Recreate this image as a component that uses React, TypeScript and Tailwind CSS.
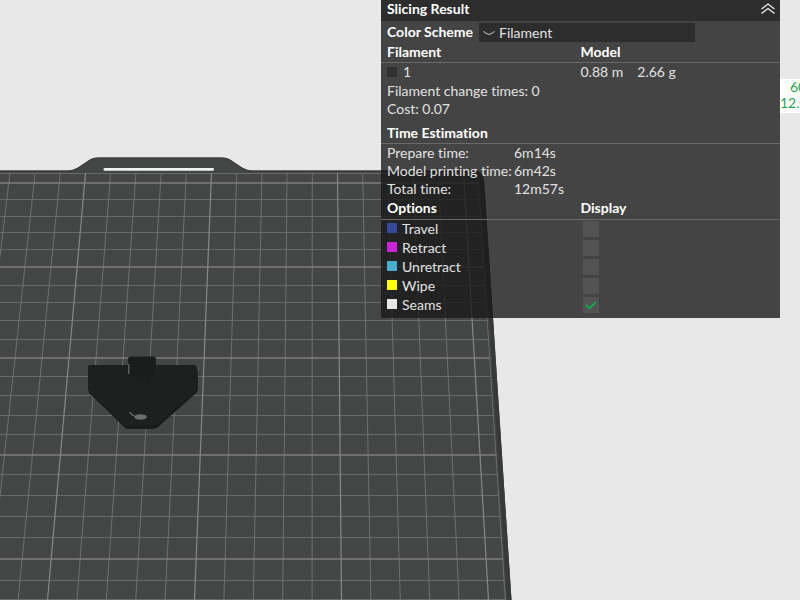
const MAJOR_ROWS = [183, 267, 358, 455, 559];
const MINOR_ROWS = [173, 199, 216, 232, 249, 285, 302, 320, 339, 376, 395, 415, 434, 474, 495, 516, 537, 580, 599];

// bed columns, counted from the major line nearest the middle
const COLUMNS = Array.from({ length: 24 }, (_, i) => i - 18);

const OPTIONS = [
  { id: "travel", label: "Travel", swatch: "bg-[#38489b]", on: false },
  { id: "retract", label: "Retract", swatch: "bg-[#cd22d6]", on: false },
  { id: "unretract", label: "Unretract", swatch: "bg-[#49adcf]", on: false },
  { id: "wipe", label: "Wipe", swatch: "bg-[#ffff00]", on: false },
  { id: "seams", label: "Seams", swatch: "bg-[#e6e6e6]", on: true },
];

const TIMES = [
  ["Prepare time:", "6m14s"],
  ["Model printing time:", "6m42s"],
  ["Total time:", "12m57s"],
];

function BuildPlate() {
  return (
    <svg
      viewBox="0 0 800 600"
      preserveAspectRatio="xMinYMin slice"
      className="block h-full w-full"
      role="img"
      aria-label="Build plate"
    >
      <defs>
        <clipPath id="grid">
          <path d="M0 173H478L506 600H0Z" />
        </clipPath>
      </defs>
      {/* plate with handle */}
      <path
        d="M0 170.500H68Q73 170.500 78 167.500L90 159.500Q93 157.500 98 157.500H222Q227 157.500 230 159.500L242 167.500Q247 170.500 252 170.500H474Q483 170.500 484 180L511.500 600H0Z"
        fill="#444645"
      />
      <path d="M0 171H68Q73 171 78 168L90 160Q93 158 98 158H222Q227 158 230 160L242 168Q247 171 252 171H474" fill="none" stroke="#3a3c3b" />
      <path d="M484 180L511.500 600H507L480 180Z" fill="#383a39" />
      <rect x="103.500" y="168" width="110.500" height="2.800" rx="1.400" fill="#f0f2f1" />

      <g clipPath="url(#grid)" fill="none">
        {MINOR_ROWS.map((y) => (
          <path key={y} d={`M0 ${y + 0.5}H510`} stroke="#686a69" />
        ))}
        {COLUMNS.map((n) => (
          <path
            key={n}
            d={`M${337.5 + n * 25.2} 173L${341.5 + n * 29.4} 600`}
            stroke={n % 5 === 0 ? "#868887" : "#6e706f"}
            strokeWidth={n % 5 === 0 ? 1.2 : 1}
          />
        ))}
        {MAJOR_ROWS.map((y) => (
          <path key={y} d={`M0 ${y}H510`} stroke="#7c7e7d" strokeWidth="1.300" />
        ))}
        <path d="M478 173L505.500 600" stroke="#686a69" strokeWidth="1.500" />
      </g>

      {/* sliced model */}
      <path d="M89 365H128V358L130 356.500H154L156 358V365H196L198 367V389L196 393L158 426L154 429H127L123 426L89 392L88 389V367Z" fill="#1e1f1f" />
      <path d="M129 358L155 357V372L148 384L139 381L130 374Z" fill="#1b1c1c" />
      <path d="M89 391L124 425H157L197 390V392L157 428H126L89 393Z" fill="#191a1a" />
      <path d="M128.800 364V374" stroke="#777978" />
      <path d="M129.500 412.500L134 416" stroke="#9b9d9c" />
      <ellipse cx="140.500" cy="417" rx="6.300" ry="2.700" fill="#6b6d6c" />
      <path d="M196 365.500L198 367V371" fill="none" stroke="#5b5d5c" />
    </svg>
  );
}

function SlicingPanel() {
  return (
    <aside className="absolute top-0 right-5 w-[calc(50%-1px)] bg-[#181818]/79 pb-1 text-[14px] leading-[18px] text-[#e2e2e2] [font-variant-ligatures:none]">
      <header className="flex h-[21px] items-start justify-between bg-[#2d2d2d] pr-1 pl-1.5">
        <h1 className="font-bold text-white">Slicing Result</h1>
        <button type="button" aria-label="Collapse" className="pt-0.5">
          <svg width="16" height="13" viewBox="0 0 16 13" fill="none" stroke="#e8e8e8" strokeWidth="1.300">
            <path d="M1.500 7L8 2L14.500 7M1.500 11.500L8 6.500L14.500 11.500" />
          </svg>
        </button>
      </header>

      <div className="flex h-[21px] items-center gap-1.5 pl-1.5">
        <label htmlFor="scheme" className="font-bold text-white">Color Scheme</label>
        <div className="mt-0.5 grid w-[216px] items-center bg-[#2d2d2d]">
          <select id="scheme" className="col-start-1 row-start-1 h-[19px] appearance-none bg-transparent pl-5">
            <option>Filament</option>
          </select>
          <svg className="pointer-events-none col-start-1 row-start-1 ml-1" width="12" height="6" viewBox="0 0 12 6" fill="none" stroke="#cccccc">
            <path d="M0.500 1.500L4 3.800Q6 5 8 3.800L11.500 1.500" />
          </svg>
        </div>
      </div>

      <table className="w-full table-fixed border-collapse text-left">
        <thead className="border-b border-[#6a6a6a] text-white">
          <tr className="h-5">
            <th className="w-1/2 pl-1.5 font-bold">Filament</th>
            <th className="font-bold">Model</th>
          </tr>
        </thead>
        <tbody>
          <tr className="h-5">
            <td className="pl-1.5">
              <span className="flex items-center gap-1.5">
                <i className="size-[10px] bg-[#303030]" />1
              </span>
            </td>
            <td>
              <span className="flex gap-3.5">
                <span>0.88 m</span>
                <span>2.66 g</span>
              </span>
            </td>
          </tr>
        </tbody>
      </table>
      <p className="pl-1.5">Filament change times: 0</p>
      <p className="pl-1.5">Cost: 0.07</p>

      <h2 className="mt-1 border-b border-[#6a6a6a] pl-1.5 leading-[21px] font-bold text-white">Time Estimation</h2>
      <dl className="grid grid-cols-[127px_1fr] pl-1.5">
        {TIMES.map(([name, value]) => (
          <div key={name} className="contents">
            <dt className="whitespace-nowrap">{name}</dt>
            <dd>{value}</dd>
          </div>
        ))}
      </dl>

      <table className="w-full table-fixed border-collapse text-left">
        <thead className="border-b border-[#6a6a6a] text-white">
          <tr className="h-[21px]">
            <th className="w-1/2 pl-1.5 font-bold">Options</th>
            <th className="font-bold">Display</th>
          </tr>
        </thead>
        <tbody>
          {OPTIONS.map((o) => (
            <tr key={o.id} className="h-[19px]">
              <td className="pl-1.5">
                <label htmlFor={o.id} className="flex items-start gap-[5px]">
                  <i className={`mt-[3px] size-[10px] ${o.swatch}`} />
                  {o.label}
                </label>
              </td>
              <td className="pl-0.5">
                <span className="grid w-4">
                  <input
                    id={o.id}
                    type="checkbox"
                    defaultChecked={o.on}
                    className="peer col-start-1 row-start-1 size-4 appearance-none bg-[#535353]"
                  />
                  <svg
                    className="pointer-events-none invisible col-start-1 row-start-1 size-4 peer-checked:visible"
                    viewBox="0 0 16 16"
                    fill="none"
                    stroke="#0fae4c"
                    strokeWidth="1.800"
                  >
                    <path d="M3 8L6.500 11.200L13 4.800" />
                  </svg>
                </span>
              </td>
            </tr>
          ))}
        </tbody>
      </table>
    </aside>
  );
}

export default function App() {
  return (
    <main className="relative h-screen w-full overflow-hidden bg-[#e8e8e8] font-['Lato',sans-serif]">
      <BuildPlate />
      <SlicingPanel />
      {/* readout running off the right edge */}
      <div className="absolute top-[79px] right-0 w-5 overflow-hidden bg-white pb-0.5 text-[14px] leading-4 whitespace-nowrap text-[#1fa850]">
        <p className="pl-[10px]">60</p>
        <p>12.0</p>
      </div>
    </main>
  );
}
